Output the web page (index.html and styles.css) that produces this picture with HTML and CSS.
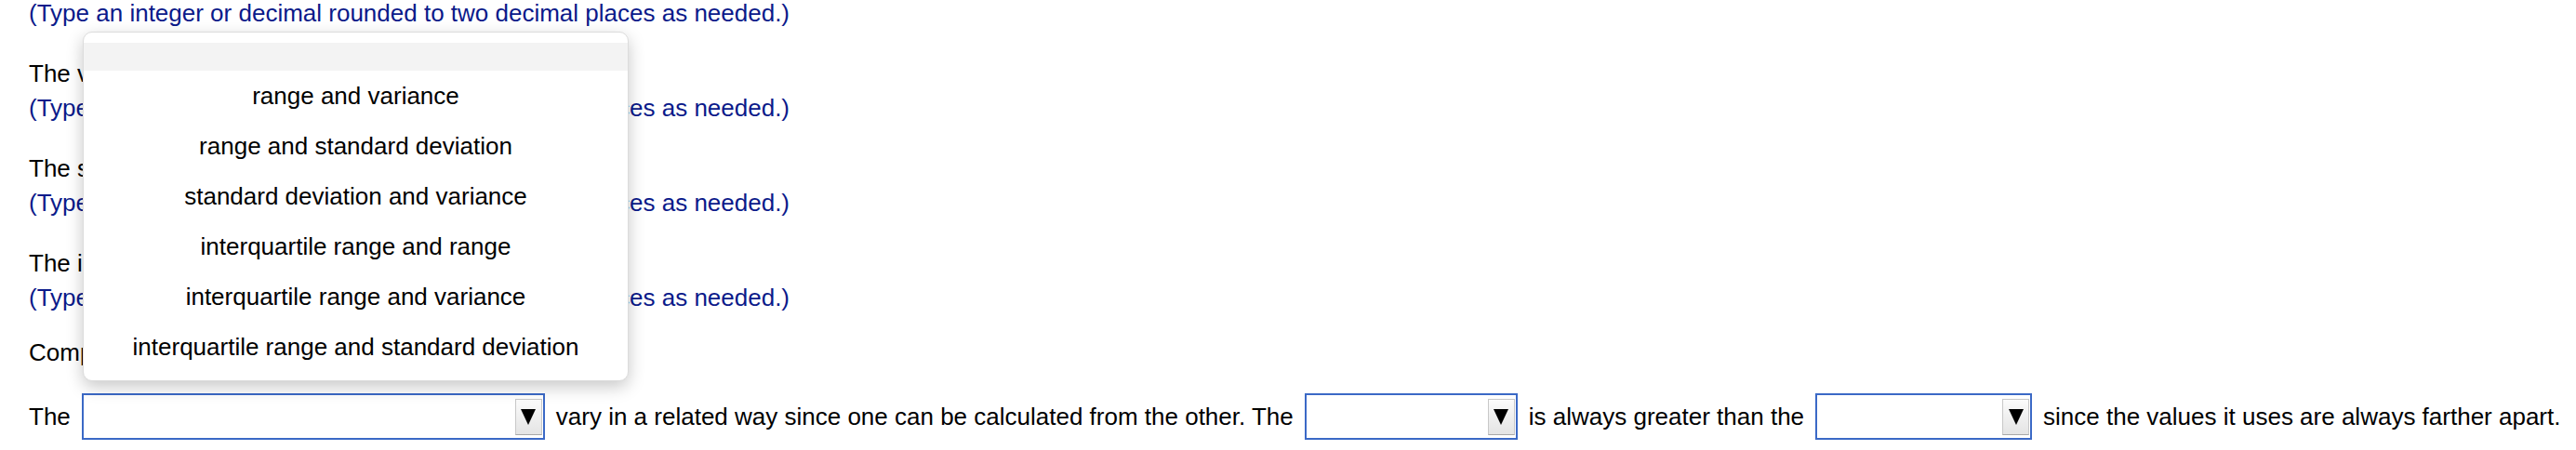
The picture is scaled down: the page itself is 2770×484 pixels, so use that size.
FILE: index.html
```html
<!DOCTYPE html>
<html lang="en">
<head>
  <meta charset="UTF-8" />
  <title>Measures of variation</title>
  <link rel="stylesheet" href="styles.css">
</head>
<body>
  <div class="page">
    <p class="hint first">(Type an integer or decimal rounded to two decimal places as needed.)</p>

    <div class="group">
      <p class="stem">The variance is</p>
      <p class="hint">(Type an integer or decimal rounded to two decimal places as needed.)</p>
    </div>

    <div class="group">
      <p class="stem">The standard deviation is</p>
      <p class="hint">(Type an integer or decimal rounded to two decimal places as needed.)</p>
    </div>

    <div class="group">
      <p class="stem">The interquartile range is</p>
      <p class="hint">(Type an integer or decimal rounded to two decimal places as needed.)</p>
    </div>

    <p class="stem compare">Compare the measures of variation.</p>

    <div class="answer-row">
      <span>The</span>
      <div class="select wide"><span class="arrow"><i></i></span></div>
      <span>vary in a related way since one can be calculated from the other. The</span>
      <div class="select narrow"><span class="arrow"><i></i></span></div>
      <span>is always greater than the</span>
      <div class="select narrow3"><span class="arrow"><i></i></span></div>
      <span>since the values it uses are always farther apart.</span>
    </div>
  </div>

  <!-- open dropdown list of the first select -->
  <ul class="menu">
    <li class="blank"></li>
    <li>range and variance</li>
    <li>range and standard deviation</li>
    <li>standard deviation and variance</li>
    <li>interquartile range and range</li>
    <li>interquartile range and variance</li>
    <li>interquartile range and standard deviation</li>
  </ul>
</body>
</html>
```

FILE: styles.css
```css
body { margin: 0; background: #fff; font-family: "Liberation Sans", Arial, sans-serif; font-size: 26px; color: #000; }
p { margin: 0; line-height: 37px; white-space: nowrap; }
.page { padding-left: 31px; margin-top: -4px; }
.hint { color: #0b1a8a; }
.group { margin-top: 28px; }
.compare { margin-top: 22px; }

.answer-row { display: flex; align-items: center; gap: 12px; margin-top: 25px; line-height: 37px; white-space: nowrap; }
.select {
  box-sizing: border-box;
  height: 50px;
  border: 2px solid #3b69c6;
  background: #fff;
  display: flex;
  justify-content: flex-end;
  align-items: center;
  padding: 1px 1px 0 0;
  flex: none;
}
.select.wide { width: 498px; }
.select.narrow { width: 229px; }
.select.narrow3 { width: 233px; }
.arrow {
  box-sizing: border-box;
  width: 29px;
  height: 39px;
  border: 1px solid #c8c8c8;
  border-bottom-color: #a8a8a8;
  background: linear-gradient(#fbfbfb, #e4e4e4);
  display: flex;
  align-items: center;
  justify-content: center;
}
.arrow i { width: 0; height: 0; border-left: 8px solid transparent; border-right: 8px solid transparent; border-top: 17px solid #000; }

.menu {
  position: absolute;
  left: 89px;
  top: 34px;
  width: 587px;
  box-sizing: border-box;
  margin: 0;
  padding: 11px 0 9px;
  list-style: none;
  background: #fff;
  border: 1px solid #dcdcdc;
  border-radius: 10px;
  box-shadow: 0 6px 18px rgba(0, 0, 0, 0.22);
}
.menu li { height: 54px; line-height: 54px; text-align: center; white-space: nowrap; }
.menu li.blank { height: 30px; background: #f3f3f3; }
```
